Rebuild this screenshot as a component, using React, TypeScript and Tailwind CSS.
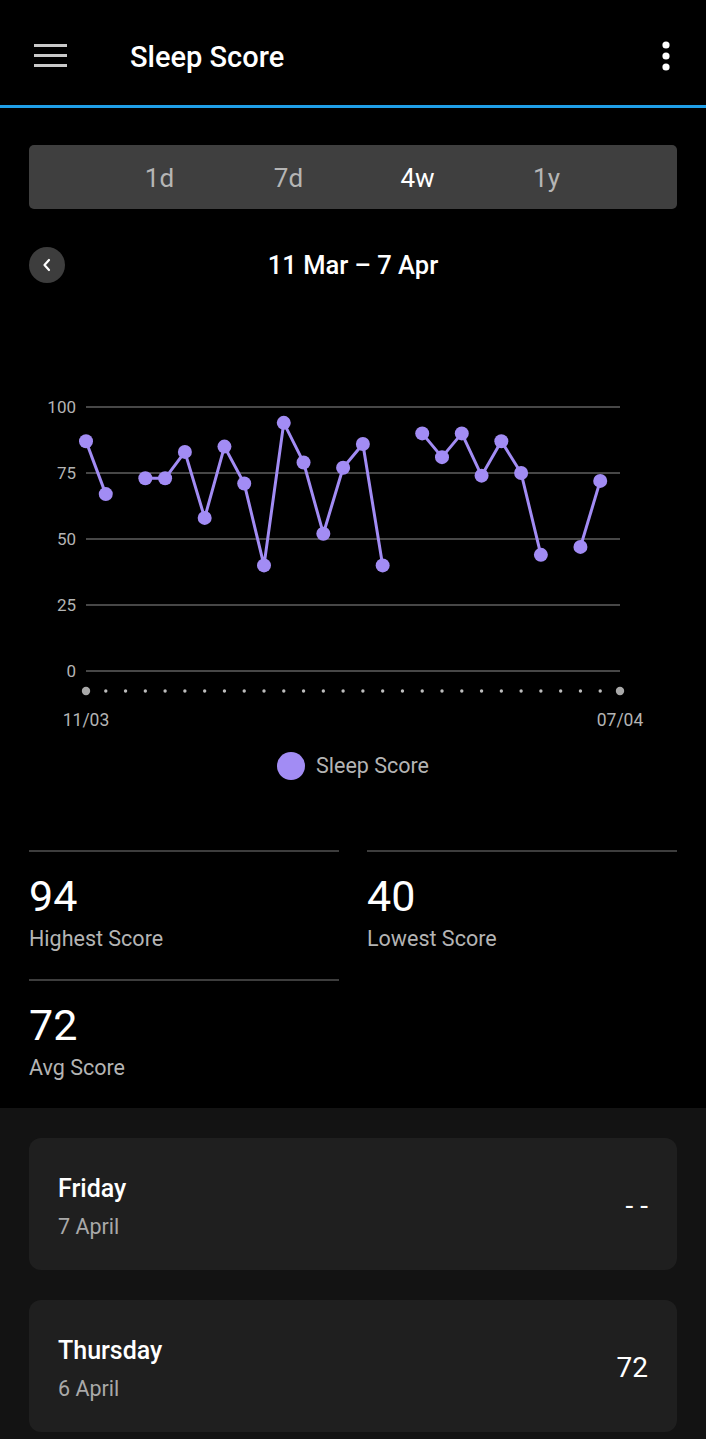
import React from "react";

const scores: (number | null)[] = [
  87, 67, null, 73, 73, 83, 58, 85, 71, 40, 94, 79, 52, 77, 86, 40, null,
  90, 81, 90, 74, 87, 75, 44, null, 47, 72, null,
];

const X0 = 86;
const X1 = 620;
const STEP = (X1 - X0) / 27;
const yOf = (v: number) => 291 - v * 2.64;
const xOf = (i: number) => X0 + i * STEP;

function SleepChart() {
  // split into runs of consecutive days with data
  const runs: { i: number; v: number }[][] = [];
  let cur: { i: number; v: number }[] = [];
  scores.forEach((v, i) => {
    if (v === null) {
      if (cur.length) runs.push(cur);
      cur = [];
    } else cur.push({ i, v });
  });
  if (cur.length) runs.push(cur);

  return (
    <svg width="706" height="360" viewBox="0 0 706 360" className="block">
      {[100, 75, 50, 25, 0].map((g) => (
        <g key={g}>
          <line x1={X0} x2={X1} y1={yOf(g)} y2={yOf(g)} stroke="#474747" strokeWidth="2" />
          <text
            x="76"
            y={yOf(g) + 6}
            textAnchor="end"
            fontSize="17"
            fill="#b4b4b4"
            fontFamily="Roboto, sans-serif"
          >
            {g}
          </text>
        </g>
      ))}
      {scores.map((_, i) =>
        i === 0 || i === 27 ? (
          <circle key={i} cx={xOf(i)} cy="311" r="4.2" fill="#a9a9a9" />
        ) : (
          <circle key={i} cx={xOf(i)} cy="311" r="1.7" fill="#bdbdbd" />
        )
      )}
      <text x={X0} y="346" textAnchor="middle" fontSize="17.5" fill="#b4b4b4" fontFamily="Roboto, sans-serif">
        11/03
      </text>
      <text x={X1} y="346" textAnchor="middle" fontSize="17.5" fill="#b4b4b4" fontFamily="Roboto, sans-serif">
        07/04
      </text>
      {runs.map((run, k) => (
        <polyline
          key={k}
          points={run.map((p) => `${xOf(p.i)},${yOf(p.v)}`).join(" ")}
          fill="none"
          stroke="#a28cf4"
          strokeWidth="3"
          strokeLinejoin="round"
        />
      ))}
      {scores.map((v, i) =>
        v === null ? null : <circle key={i} cx={xOf(i)} cy={yOf(v)} r="7" fill="#a28cf4" />
      )}
    </svg>
  );
}

function Stat({ value, label }: { value: string; label: string }) {
  return (
    <div className="border-t-2 border-[#3d3d3d] pt-[20px] pb-[28px]">
      <div className="text-[43px] leading-[48px] text-white">{value}</div>
      <div className="mt-[7px] text-[21.5px] leading-[24px] text-[#b4b4b4]">{label}</div>
    </div>
  );
}

function DayCard({ day, date, score }: { day: string; date: string; score: string }) {
  return (
    <div className="flex h-[132px] items-center justify-between rounded-[12px] bg-[#1f1f1f] px-[29px]">
      <div className="pt-[6px]">
        <div className="text-[25px] font-medium leading-[28px] text-white">{day}</div>
        <div className="mt-[12px] text-[21.5px] leading-[24px] text-[#a9a9a9]">{date}</div>
      </div>
      <div className="pt-[3px] text-[28px] leading-[32px] text-white">{score}</div>
    </div>
  );
}

export default function App() {
  return (
    <div className="min-h-screen bg-black font-['Roboto',sans-serif]">
      <div className="flex h-[105px] items-center pt-[6px]">
        <svg width="34" height="24" viewBox="0 0 34 24" className="ml-[34px]">
          <rect x="0" y="0" width="33" height="3" fill="#c9c9c9" />
          <rect x="0" y="10" width="33" height="3" fill="#c9c9c9" />
          <rect x="0" y="20" width="33" height="3" fill="#c9c9c9" />
        </svg>
        <div className="ml-[62px] pt-[4px] text-[29px] font-medium text-white">Sleep Score</div>
        <svg width="10" height="32" viewBox="0 0 10 32" className="ml-auto mr-[35px]">
          <circle cx="5" cy="5" r="3.6" fill="#fff" />
          <circle cx="5" cy="16" r="3.6" fill="#fff" />
          <circle cx="5" cy="27" r="3.6" fill="#fff" />
        </svg>
      </div>
      <div className="h-[3px] bg-[#1f9fe8]" />

      <div className="px-[29px]">
        <div className="mt-[37px] flex h-[64px] items-center justify-center rounded-[5px] bg-[#3f3f3f] pt-[3px]">
          {["1d", "7d", "4w", "1y"].map((t) => (
            <div
              key={t}
              className={
                t === "4w"
                  ? "w-[129px] text-center text-[26px] text-white"
                  : "w-[129px] text-center text-[26px] text-[#b5b5b5]"
              }
            >
              {t}
            </div>
          ))}
        </div>

        <div className="mt-[37px] grid h-[36px] grid-cols-[36px_1fr_36px] items-center">
          <div className="flex h-[36px] w-[36px] items-center justify-center rounded-full bg-[#3d3d3d]">
            <svg width="12" height="14" viewBox="0 0 12 14">
              <path d="M8 2 L3.5 7 L8 12" fill="none" stroke="#fff" strokeWidth="2.2" strokeLinecap="round" strokeLinejoin="round" />
            </svg>
          </div>
          <div className="text-center text-[25.5px] font-medium text-white">11 Mar – 7 Apr</div>
          <div />
        </div>
      </div>

      <div className="mt-[98px]">
        <SleepChart />
      </div>

      <div className="mt-[12px] flex items-center justify-center gap-[11px]">
        <div className="h-[28px] w-[28px] rounded-full bg-[#a28cf4]" />
        <div className="text-[21.5px] leading-[28px] text-[#b4b4b4]">Sleep Score</div>
      </div>

      <div className="mt-[70px] grid grid-cols-2 gap-x-[28px] px-[29px]">
        <Stat value="94" label="Highest Score" />
        <Stat value="40" label="Lowest Score" />
        <Stat value="72" label="Avg Score" />
      </div>

      <div className="flex flex-col gap-[30px] bg-[#131313] px-[29px] pt-[30px] pb-[30px]">
        <DayCard day="Friday" date="7 April" score="- -" />
        <DayCard day="Thursday" date="6 April" score="72" />
      </div>
    </div>
  );
}
